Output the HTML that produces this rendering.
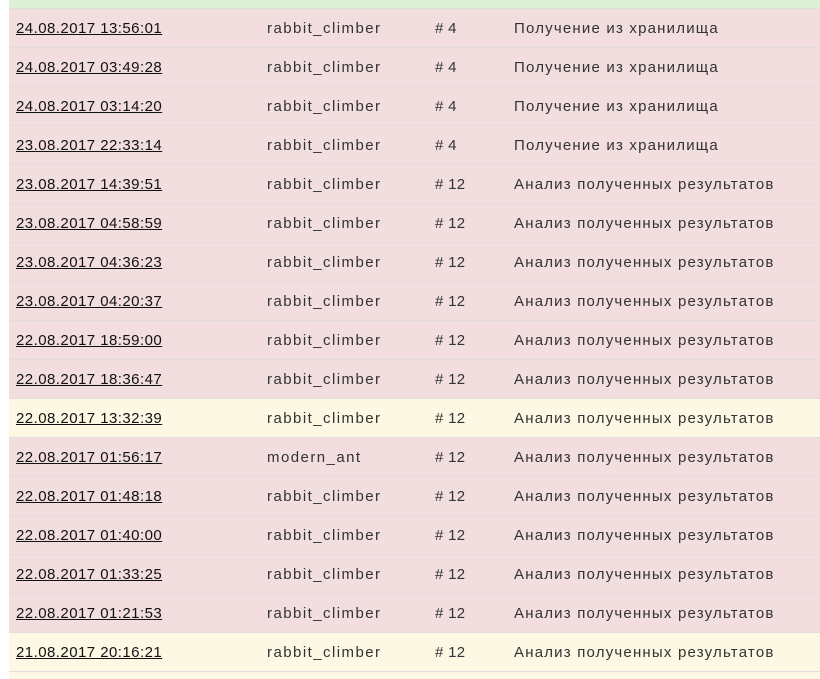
<!DOCTYPE html>
<html><head><meta charset="utf-8"><style>
html,body{margin:0;width:820px;height:679px;overflow:hidden}
body{position:relative;background:#fff;font-family:"Liberation Sans",sans-serif;font-size:15px;color:#333}
.top{position:absolute;left:9px;top:0;width:811px;height:8px;background:#dff0d8;border-bottom:1px solid #d6e5cf}
.r{position:absolute;left:9px;width:811px;height:38px;border-bottom:1px solid #e2dcdc;background:#f2dede}
.r.y{background:#fcf8e3}
.r span{position:absolute;top:11px;white-space:nowrap}
.d{left:7px;color:#111;text-decoration:underline;letter-spacing:0.45px}
.u{left:258px;letter-spacing:1.45px}
.n{left:426px;letter-spacing:0.3px}
.t{left:505px;letter-spacing:1.2px}
</style></head><body>
<div class="top"></div>
<div class="r" style="top:9px"><span class="d">24.08.2017 13:56:01</span><span class="u">rabbit_climber</span><span class="n"># 4</span><span class="t">Получение из хранилища</span></div>
<div class="r" style="top:48px"><span class="d">24.08.2017 03:49:28</span><span class="u">rabbit_climber</span><span class="n"># 4</span><span class="t">Получение из хранилища</span></div>
<div class="r" style="top:87px"><span class="d">24.08.2017 03:14:20</span><span class="u">rabbit_climber</span><span class="n"># 4</span><span class="t">Получение из хранилища</span></div>
<div class="r" style="top:126px"><span class="d">23.08.2017 22:33:14</span><span class="u">rabbit_climber</span><span class="n"># 4</span><span class="t">Получение из хранилища</span></div>
<div class="r" style="top:165px"><span class="d">23.08.2017 14:39:51</span><span class="u">rabbit_climber</span><span class="n"># 12</span><span class="t">Анализ полученных результатов</span></div>
<div class="r" style="top:204px"><span class="d">23.08.2017 04:58:59</span><span class="u">rabbit_climber</span><span class="n"># 12</span><span class="t">Анализ полученных результатов</span></div>
<div class="r" style="top:243px"><span class="d">23.08.2017 04:36:23</span><span class="u">rabbit_climber</span><span class="n"># 12</span><span class="t">Анализ полученных результатов</span></div>
<div class="r" style="top:282px"><span class="d">23.08.2017 04:20:37</span><span class="u">rabbit_climber</span><span class="n"># 12</span><span class="t">Анализ полученных результатов</span></div>
<div class="r" style="top:321px"><span class="d">22.08.2017 18:59:00</span><span class="u">rabbit_climber</span><span class="n"># 12</span><span class="t">Анализ полученных результатов</span></div>
<div class="r" style="top:360px"><span class="d">22.08.2017 18:36:47</span><span class="u">rabbit_climber</span><span class="n"># 12</span><span class="t">Анализ полученных результатов</span></div>
<div class="r y" style="top:399px"><span class="d">22.08.2017 13:32:39</span><span class="u">rabbit_climber</span><span class="n"># 12</span><span class="t">Анализ полученных результатов</span></div>
<div class="r" style="top:438px"><span class="d">22.08.2017 01:56:17</span><span class="u">modern_ant</span><span class="n"># 12</span><span class="t">Анализ полученных результатов</span></div>
<div class="r" style="top:477px"><span class="d">22.08.2017 01:48:18</span><span class="u">rabbit_climber</span><span class="n"># 12</span><span class="t">Анализ полученных результатов</span></div>
<div class="r" style="top:516px"><span class="d">22.08.2017 01:40:00</span><span class="u">rabbit_climber</span><span class="n"># 12</span><span class="t">Анализ полученных результатов</span></div>
<div class="r" style="top:555px"><span class="d">22.08.2017 01:33:25</span><span class="u">rabbit_climber</span><span class="n"># 12</span><span class="t">Анализ полученных результатов</span></div>
<div class="r" style="top:594px"><span class="d">22.08.2017 01:21:53</span><span class="u">rabbit_climber</span><span class="n"># 12</span><span class="t">Анализ полученных результатов</span></div>
<div class="r y" style="top:633px"><span class="d">21.08.2017 20:16:21</span><span class="u">rabbit_climber</span><span class="n"># 12</span><span class="t">Анализ полученных результатов</span></div>
<div class="r y" style="top:672px;height:7px;border:0"></div>
</body></html>
